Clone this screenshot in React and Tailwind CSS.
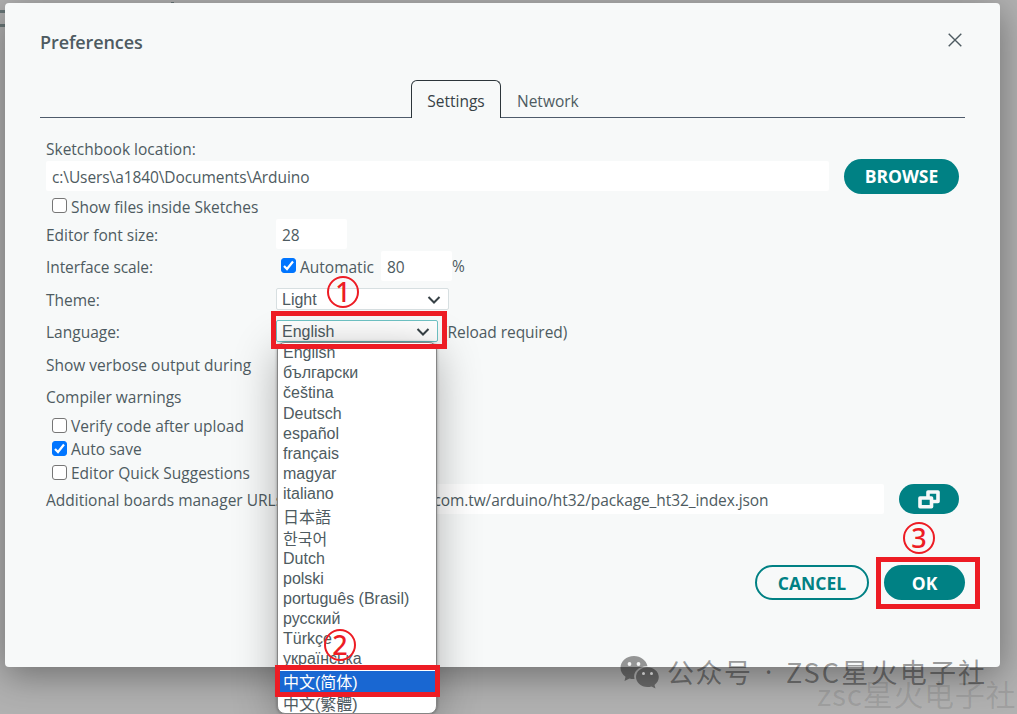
import React, { useState } from 'react';
import clsx from 'clsx';

const languages = [
  { name: 'English', height: 'h-5' },
  { name: 'български', height: 'h-5' },
  { name: 'čeština', height: 'h-5' },
  { name: 'Deutsch', height: 'h-[21px]' },
  { name: 'español', height: 'h-5' },
  { name: 'français', height: 'h-5' },
  { name: 'magyar', height: 'h-5' },
  { name: 'italiano', height: 'h-5' },
  { name: '日本語', height: 'h-[27px]' },
  { name: '한국어', height: 'h-[18px]' },
  { name: 'Dutch', height: 'h-5' },
  { name: 'polski', height: 'h-5' },
  { name: 'português (Brasil)', height: 'h-5' },
  { name: 'русский', height: 'h-5' },
  { name: 'Türkçe', height: 'h-5' },
  { name: 'українська', height: 'h-5' },
  { name: '中文(简体)', height: 'mt-[2px] h-[23px]' },
  { name: '中文(繁體)', height: 'h-[22px]' },
];

const Checkbox = ({ label, defaultChecked = false }) => {
  const [checked, setChecked] = useState(defaultChecked);

  return (
    <label className="flex items-center">
      <input type="checkbox" className="sr-only" checked={checked} onChange={(e) => setChecked(e.target.checked)} />
      <span
        className={clsx(
          'mr-1 mb-[2px] flex size-[15px] items-center justify-center rounded-[3px] border',
          checked ? 'border-[#0075ff] bg-[#0075ff]' : 'border-[#767676] bg-white'
        )}
      >
        {checked && (
          <svg viewBox="0 0 15 15" className="size-[15px] shrink-0" fill="none" stroke="white" strokeWidth="2.2">
            <path d="M3 8l3 3 6-7.5" />
          </svg>
        )}
      </span>
      <span>{label}</span>
    </label>
  );
};

const Select = ({ value, className }) => (
  <button
    type="button"
    className={clsx(
      'mb-[2px] flex h-[22px] items-center justify-between rounded-[2px] border pr-[7px] pl-[5px] font-[Liberation_Sans,sans-serif] text-base leading-none',
      className
    )}
  >
    <span className="mt-[2px]">{value}</span>
    <svg viewBox="0 0 14 8" className="mt-px h-2 w-[14px]" fill="none" stroke="#374146" strokeWidth="2">
      <path d="M1.500 1l5.500 5.500L12.500 1" />
    </svg>
  </button>
);

const Field = ({ value, className }) => (
  <div className={clsx('flex h-[30px] items-center rounded-[2px] bg-white pt-px pl-[6px] tracking-[-0.090px]', className)}>
    <span>{value}</span>
  </div>
);

const Marker = ({ number, className }) => (
  <div
    className={clsx(
      'absolute flex size-8 items-center justify-center rounded-full border-2 border-[#ed1c24] pb-[2px] font-[Noto_Sans,sans-serif] text-[27px] leading-none font-medium text-[#ed1c24]',
      className
    )}
  >
    {number}
  </div>
);

const LanguageMenu = () => (
  <ul className="absolute top-[342px] left-[277px] h-[372px] w-[160px] overflow-hidden rounded-lg border border-[#858585] bg-white font-[Liberation_Sans,Noto_Sans_CJK_SC,sans-serif] text-base leading-none text-[#4e5b61] shadow-[0_0_3px_rgba(0,0,0,0.35),0_8px_44px_rgba(0,0,0,0.3)]">
    {languages.map(({ name, height }) => (
      <li
        key={name}
        className={clsx('flex items-center pl-[5px]', height, name === '中文(简体)' && 'bg-[#1967d2] text-white')}
      >
        {name}
      </li>
    ))}
  </ul>
);

const WeChatIcon = () => (
  <svg viewBox="0 0 40 34" className="h-[34px] w-10">
    <path
      fill="currentColor"
      d="M14 1C6.300 1 .5 6.300.5 12.800c0 3.700 1.900 6.900 5 9L4.500 26l5-2.600c1.600.4 3.200.6 5 .5C12.500 16.500 19 11 27.500 11.200 26.300 5.300 20.700 1 14 1z"
    />
    <path
      fill="currentColor"
      d="M27.500 12.200c-6.500 0-11.500 4.400-11.500 9.900s5 9.900 11.500 9.900c1.400 0 2.800-.2 4-.6l4 2-1-3.500c2.600-1.800 4.300-4.600 4.300-7.800 0-5.500-5-9.900-11.300-9.900z"
    />
    <g fill="#f4f5f5">
      <circle cx="9.500" cy="9" r="1.900" />
      <circle cx="18.500" cy="9" r="1.900" />
    </g>
    <g fill="#bdbdbd">
      <circle cx="23.500" cy="18.500" r="1.500" />
      <circle cx="31.500" cy="18.500" r="1.500" />
    </g>
  </svg>
);

const App = () => {
  return (
    <div className="relative h-[714px] w-[1017px] overflow-hidden bg-[#b1b1b1] font-[Open_Sans,Noto_Sans,sans-serif] text-[15.5px] leading-5 text-[#4e5b61]">
      {/* editor behind the dialog */}
      <div className="absolute top-[10px] left-0 h-[17px] w-2 border-y-[3px] border-[#697778]" />
      <div className="absolute top-[2px] left-[171px] h-1 w-[3px] bg-[#697778]" />

      <div className="relative mt-[3px] ml-[5px] flex h-[664px] w-[995px] flex-col rounded-[4px] bg-[#f7f9f9] pr-[35px] pl-[35px] shadow-[0_8px_36px_rgba(0,0,0,0.38)]">
        <header className="flex h-[77px] items-start justify-between pt-[27px]">
          <h1 className="text-[18px] leading-6 font-semibold tracking-[-0.1px]">Preferences</h1>
          <button type="button" aria-label="Close" className="mt-[3px] mr-[3px]">
            <svg viewBox="0 0 14 14" className="size-[14px]" fill="none" stroke="#4e5b61" strokeWidth="1.400">
              <path d="M.7.7l12.600 12.600M13.300.7L.7 13.300" />
            </svg>
          </button>
        </header>

        <nav className="flex h-[38px] shrink-0">
          <div className="w-[371px] border-b border-[#4e5b6b]" />
          <div className="flex w-[90px] items-center justify-center rounded-t-[6px] border border-b-0 border-[#2c353a] pt-[3px] text-[#374146]">
            Settings
          </div>
          <div className="flex flex-1 items-center border-b border-[#4e5b6b] pt-1 pl-4">Network</div>
        </nav>

        <main className="ml-[6px] flex flex-col">
          <div className="mt-[21px] h-5">Sketchbook location:</div>
          <div className="flex h-[35px] items-start">
            <Field value="c:\Users\a1840\Documents\Arduino" className="mt-[2px] w-[783px]" />
            <button type="button" className="ml-[15px] h-[35px] w-[115px] rounded-full bg-[#008184] pb-px text-[17.500px] font-bold text-white">
              BROWSE
            </button>
          </div>
          <div className="flex h-[25px] items-center pl-[6px]">
            <Checkbox label="Show files inside Sketches" />
          </div>
          <div className="flex h-8 items-start">
            <div className="mt-[6px] w-[230px]">Editor font size:</div>
            <Field value="28" className="w-[71px]" />
          </div>
          <div className="flex h-[30px] items-center">
            <div className="mt-[2px] w-[235px] tracking-[-0.1px]">Interface scale:</div>
            <div className="mt-px w-[100px]">
              <Checkbox label="Automatic" defaultChecked />
            </div>
            <Field value="80" className="w-[71px]" />
            <span>%</span>
          </div>
          <div className="mt-[3px] flex h-8 items-center">
            <div className="w-[230px]">Theme:</div>
            <Select value="Light" className="w-[173px] border-[#d7dfe1] bg-white" />
          </div>
          <div className="flex h-8 items-center">
            <div className="w-[230px]">Language:</div>
            <Select value="English" className="w-[162px] border-[#6fc3c5] bg-white" />
            <span className="ml-[5px] tracking-[-0.060px]">(Reload required)</span>
          </div>
          <div className="mt-px flex h-8 items-center">Show verbose output during</div>
          <div className="flex h-8 items-center">Compiler warnings</div>
          <div className="mt-px flex h-6 items-center pl-[6px]">
            <Checkbox label="Verify code after upload" />
          </div>
          <div className="flex h-[22px] items-center pl-[6px]">
            <Checkbox label="Auto save" defaultChecked />
          </div>
          <div className="mt-px flex h-6 items-center pl-[6px]">
            <Checkbox label="Editor Quick Suggestions" />
          </div>
          <div className="-mt-px flex h-[30px] items-center">
            <div className="mt-[2px] w-[240px] whitespace-nowrap">Additional boards manager URLs:</div>
            <Field
              value="https://www.holtek.com.tw/arduino/ht32/package_ht32_index.json"
              className="w-[598px] pl-[7px]"
            />
            <button type="button" aria-label="Edit URLs" className="ml-[15px] flex h-[30px] w-[60px] items-center justify-center rounded-full bg-[#008184]">
              <svg viewBox="0 0 22 19" className="h-[19px] w-[22px]" fill="none" stroke="#f7f9f9" strokeWidth="3.600" strokeLinejoin="round">
                <path d="M10 7V2h10v9.500h-5.500" />
                <path d="M2 8h11.500v8.800H2z" />
              </svg>
            </button>
          </div>
        </main>

        <footer className="mt-[51px] flex justify-end gap-[15px] text-[17.500px] font-bold">
          <button type="button" className="h-[35px] w-[114px] rounded-full border-2 border-[#008184] text-[#008184]">
            CANCEL
          </button>
          <button type="button" className="h-[35px] w-[81px] rounded-full bg-[#008184] text-white">
            OK
          </button>
        </footer>
      </div>

      <LanguageMenu />

      {/* watermarks */}
      <div className="absolute top-[655px] left-[620px] flex items-center font-[Noto_Sans_CJK_SC,sans-serif] text-[27px] leading-[34px] whitespace-nowrap text-black/40">
        <WeChatIcon />
        <span className="ml-[7px] w-[98px] tracking-[1.500px]">公众号</span>
        <span className="w-[21px] font-[Noto_Sans,sans-serif]">·</span>
        <span className="tracking-[2.200px]">ZSC星火电子社</span>
      </div>
      <div className="absolute top-[676px] left-[817px] font-[Noto_Sans_CJK_SC,sans-serif] text-[30px] leading-[34px] tracking-[0.700px] whitespace-nowrap text-black/10">
        zsc星火电子社
      </div>

      {/* step highlights */}
      <div className="absolute top-[311px] left-[271px] h-[38px] w-[176px] border-5 border-[#ed1c24]" />
      <div className="absolute top-[665px] left-[275px] h-8 w-[165px] border-5 border-[#ed1c24]" />
      <div className="absolute top-[557px] left-[876px] h-[52px] w-[104px] border-5 border-[#ed1c24]" />
      <Marker number="1" className="top-[276px] left-[327px]" />
      <Marker number="2" className="top-[629px] left-[324px]" />
      <Marker number="3" className="top-[522px] left-[903px]" />
    </div>
  );
};

export default App;
